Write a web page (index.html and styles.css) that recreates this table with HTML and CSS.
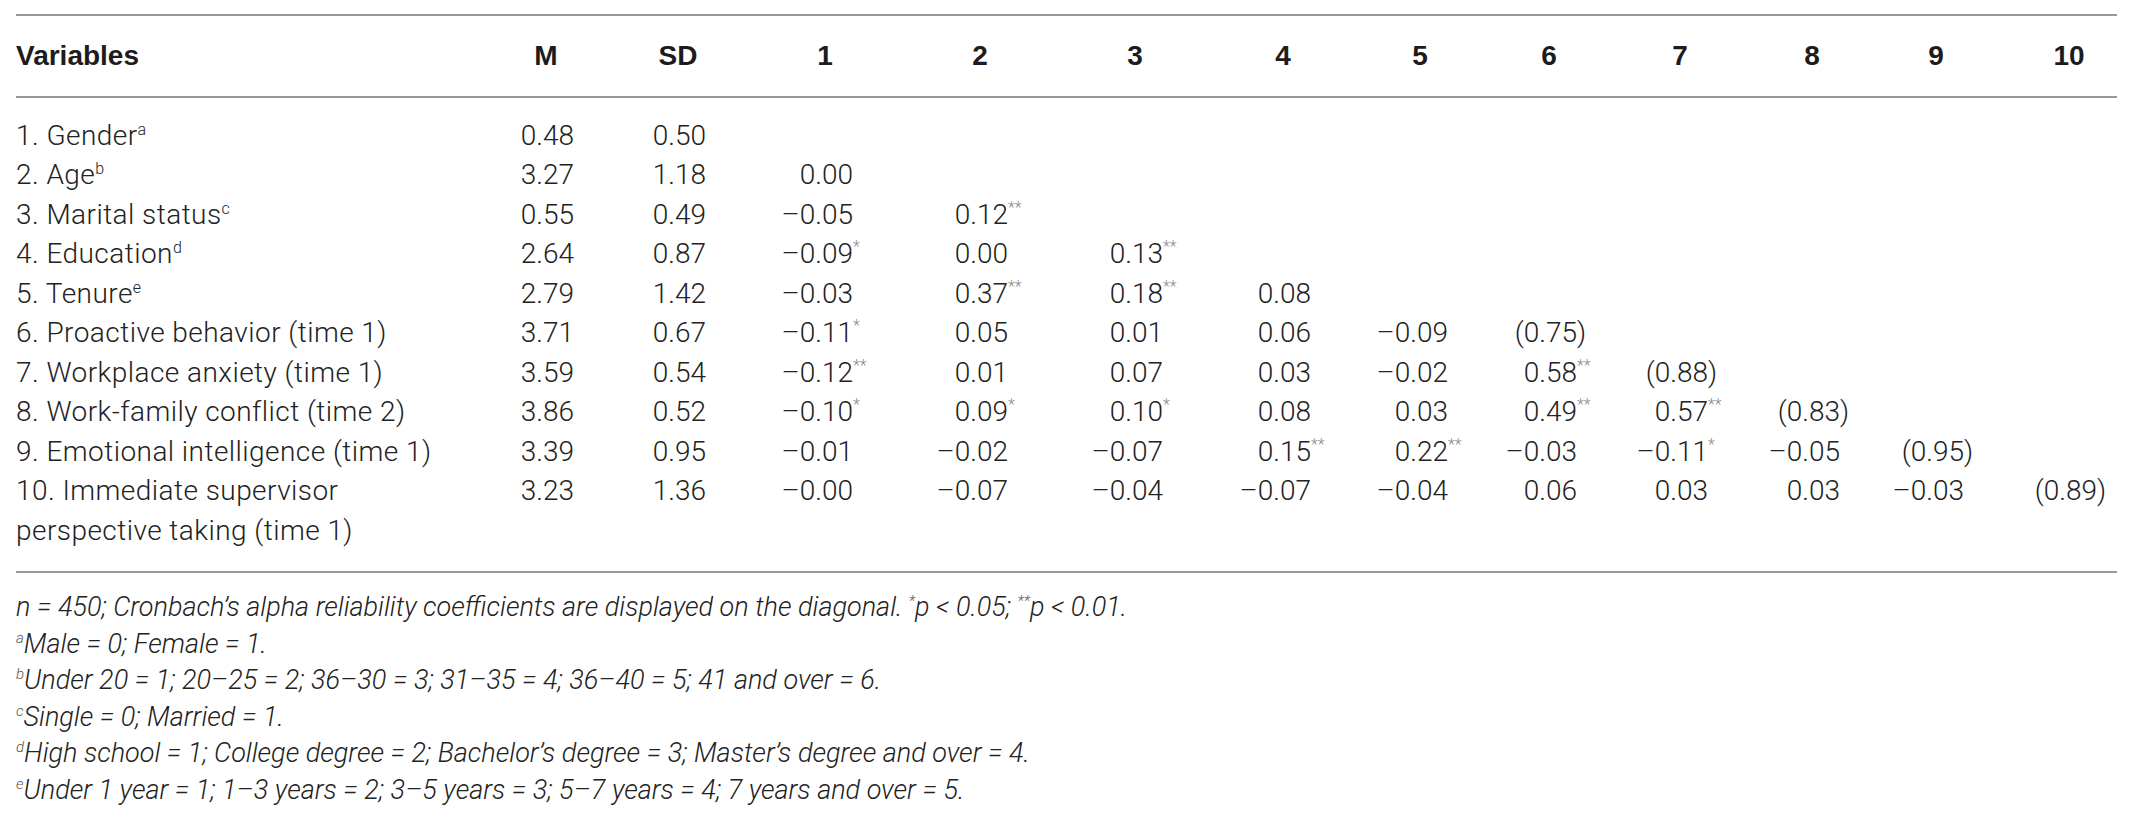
FILE: index.html
```html
<!DOCTYPE html>
<html lang="en">
<head>
    <meta charset="UTF-8">
    <meta name="viewport" content="width=device-width, initial-scale=1.0">
    <title>Descriptive statistics and correlations</title>
    <link rel="stylesheet" href="styles.css">
</head>
<body>
    <div class="page">
        <table class="corr">
            <colgroup>
                <col class="c-var">
                <col class="c-m">
                <col class="c-sd">
                <col class="c-1">
                <col class="c-2">
                <col class="c-3">
                <col class="c-4">
                <col class="c-5">
                <col class="c-6">
                <col class="c-7">
                <col class="c-8">
                <col class="c-9">
                <col class="c-10">
            </colgroup>
            <thead>
                <tr>
                    <th class="var">Variables</th>
                    <th><span class="hd">M</span></th>
                    <th><span class="hd">SD</span></th>
                    <th><span class="hd">1</span></th>
                    <th><span class="hd">2</span></th>
                    <th><span class="hd">3</span></th>
                    <th><span class="hd">4</span></th>
                    <th><span class="hd">5</span></th>
                    <th><span class="hd">6</span></th>
                    <th><span class="hd">7</span></th>
                    <th><span class="hd">8</span></th>
                    <th><span class="hd">9</span></th>
                    <th><span class="hd">10</span></th>
                </tr>
            </thead>
            <tbody>
                <tr>
                    <td class="var">1. Gender<sup class="mark">a</sup></td>
                    <td>0.48</td><td>0.50</td>
                    <td></td><td></td><td></td><td></td><td></td><td></td><td></td><td></td><td></td><td></td>
                </tr>
                <tr>
                    <td class="var">2. Age<sup class="mark">b</sup></td>
                    <td>3.27</td><td>1.18</td>
                    <td>0.00</td>
                    <td></td><td></td><td></td><td></td><td></td><td></td><td></td><td></td><td></td>
                </tr>
                <tr>
                    <td class="var">3. Marital status<sup class="mark">c</sup></td>
                    <td>0.55</td><td>0.49</td>
                    <td>–0.05</td>
                    <td>0.12<span class="sig">**</span></td>
                    <td></td><td></td><td></td><td></td><td></td><td></td><td></td><td></td>
                </tr>
                <tr>
                    <td class="var">4. Education<sup class="mark">d</sup></td>
                    <td>2.64</td><td>0.87</td>
                    <td>–0.09<span class="sig">*</span></td>
                    <td>0.00</td>
                    <td>0.13<span class="sig">**</span></td>
                    <td></td><td></td><td></td><td></td><td></td><td></td><td></td>
                </tr>
                <tr>
                    <td class="var">5. Tenure<sup class="mark">e</sup></td>
                    <td>2.79</td><td>1.42</td>
                    <td>–0.03</td>
                    <td>0.37<span class="sig">**</span></td>
                    <td>0.18<span class="sig">**</span></td>
                    <td>0.08</td>
                    <td></td><td></td><td></td><td></td><td></td><td></td>
                </tr>
                <tr>
                    <td class="var">6. Proactive behavior (time 1)</td>
                    <td>3.71</td><td>0.67</td>
                    <td>–0.11<span class="sig">*</span></td>
                    <td>0.05</td>
                    <td>0.01</td>
                    <td>0.06</td>
                    <td>–0.09</td>
                    <td>(0.75<span class="tail">)</span></td>
                    <td></td><td></td><td></td><td></td>
                </tr>
                <tr>
                    <td class="var">7. Workplace anxiety (time 1)</td>
                    <td>3.59</td><td>0.54</td>
                    <td>–0.12<span class="sig">**</span></td>
                    <td>0.01</td>
                    <td>0.07</td>
                    <td>0.03</td>
                    <td>–0.02</td>
                    <td>0.58<span class="sig">**</span></td>
                    <td>(0.88<span class="tail">)</span></td>
                    <td></td><td></td><td></td>
                </tr>
                <tr>
                    <td class="var">8. Work-family conflict (time 2)</td>
                    <td>3.86</td><td>0.52</td>
                    <td>–0.10<span class="sig">*</span></td>
                    <td>0.09<span class="sig">*</span></td>
                    <td>0.10<span class="sig">*</span></td>
                    <td>0.08</td>
                    <td>0.03</td>
                    <td>0.49<span class="sig">**</span></td>
                    <td>0.57<span class="sig">**</span></td>
                    <td>(0.83<span class="tail">)</span></td>
                    <td></td><td></td>
                </tr>
                <tr>
                    <td class="var">9. Emotional intelligence (time 1)</td>
                    <td>3.39</td><td>0.95</td>
                    <td>–0.01</td>
                    <td>–0.02</td>
                    <td>–0.07</td>
                    <td>0.15<span class="sig">**</span></td>
                    <td>0.22<span class="sig">**</span></td>
                    <td>–0.03</td>
                    <td>–0.11<span class="sig">*</span></td>
                    <td>–0.05</td>
                    <td>(0.95<span class="tail">)</span></td>
                    <td></td>
                </tr>
                <tr>
                    <td class="var">10. Immediate supervisor<br>perspective taking (time 1)</td>
                    <td>3.23</td><td>1.36</td>
                    <td>–0.00</td>
                    <td>–0.07</td>
                    <td>–0.04</td>
                    <td>–0.07</td>
                    <td>–0.04</td>
                    <td>0.06</td>
                    <td>0.03</td>
                    <td>0.03</td>
                    <td>–0.03</td>
                    <td>(0.89<span class="tail">)</span></td>
                </tr>
            </tbody>
        </table>

        <div class="notes">
            <p>n = 450; Cronbach’s alpha reliability coefficients are displayed on the diagonal. <sup>*</sup>p &lt; 0.05; <sup>**</sup>p &lt; 0.01.</p>
            <p><sup>a</sup>Male = 0; Female = 1.</p>
            <p><sup>b</sup>Under 20 = 1; 20–25 = 2; 36–30 = 3; 31–35 = 4; 36–40 = 5; 41 and over = 6.</p>
            <p><sup>c</sup>Single = 0; Married = 1.</p>
            <p><sup>d</sup>High school = 1; College degree = 2; Bachelor’s degree = 3; Master’s degree and over = 4.</p>
            <p><sup>e</sup>Under 1 year = 1; 1–3 years = 2; 3–5 years = 3; 5–7 years = 4; 7 years and over = 5.</p>
        </div>
    </div>
</body>
</html>
```

FILE: styles.css
```css
body {
    margin: 0;
    background-color: #ffffff;
    color: #222;
    font-family: "Roboto", "Liberation Sans", sans-serif;
    font-weight: 300;
}
.page {
    padding: 14px 0 0 16px;
    width: 2101px;
}
.corr {
    width: 2101px;
    table-layout: fixed;
    border-collapse: collapse;
    font-size: 28px;
}
.c-var { width: 458px; }
.c-m { width: 100px; }
.c-sd { width: 132px; }
.c-1 { width: 147px; }
.c-2 { width: 155px; }
.c-3 { width: 155px; }
.c-4 { width: 148px; }
.c-5 { width: 137px; }
.c-6 { width: 129px; }
.c-7 { width: 131px; }
.c-8 { width: 132px; }
.c-9 { width: 124px; }
.c-10 { width: 153px; }

.corr th {
    font-family: "Liberation Sans", Arial, sans-serif;
    font-weight: 700;
    line-height: 39.5px;
    padding: 20px 0;
    text-align: right;
    border-top: 2px solid #9a9a9a;
    border-bottom: 2px solid #9a9a9a;
    color: #1c1c1c;
}
.corr .hd {
    display: inline-block;
    width: 56px;
    text-align: center;
}
.corr td {
    line-height: 39.5px;
    padding: 0;
    text-align: right;
    vertical-align: top;
    white-space: nowrap;
}
.corr th:last-child, .corr td:last-child {
    padding-right: 20px;
}
.corr th.var, .corr td.var {
    text-align: left;
}
.corr td.var {
    letter-spacing: 0.45px;
}
.corr tbody tr:first-child td {
    padding-top: 18px;
}
.corr tbody tr:last-child td {
    padding-bottom: 21px;
    border-bottom: 2px solid #9a9a9a;
}
.mark {
    font-size: 16px;
    line-height: 0;
    vertical-align: 10px;
}
.sig, .tail {
    display: inline-block;
    width: 0;
    text-align: left;
    white-space: nowrap;
}
.sig {
    font-size: 16px;
    line-height: 0;
    vertical-align: 11px;
    color: #8a8a8a;
}
.notes {
    margin-top: 16px;
    font-size: 27px;
    font-style: italic;
    line-height: 36.5px;
}
.notes p {
    margin: 0;
}
.notes sup {
    font-size: 15px;
    line-height: 0;
    vertical-align: 10px;
    color: #555;
}
```
